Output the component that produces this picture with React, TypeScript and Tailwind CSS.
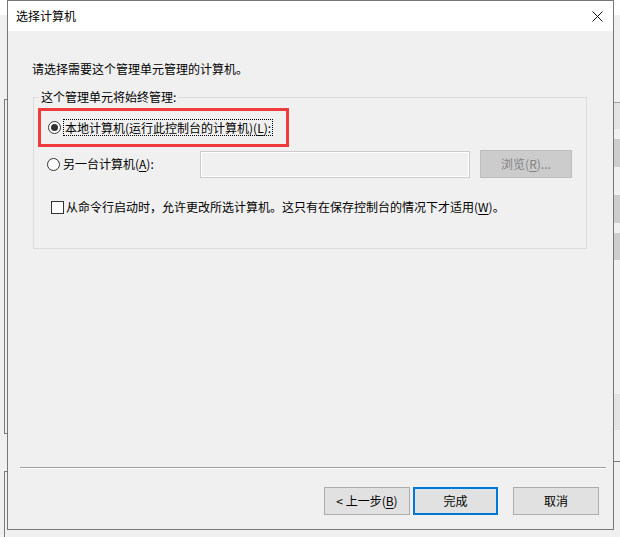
import React from "react";

const font = "font-['Noto_Sans_CJK_SC',sans-serif]";

const Key = ({ children }: { children: React.ReactNode }) => (
  <span className="underline underline-offset-2">{children}</span>
);

const Radio = ({ checked }: { checked?: boolean }) => (
  <span className="flex h-[13px] w-[13px] shrink-0 items-center justify-center rounded-full border border-[#333333] bg-white">
    {checked && <span className="h-[7px] w-[7px] rounded-full bg-[#333333]" />}
  </span>
);

const Button = ({ children, primary }: { children: React.ReactNode; primary?: boolean }) => (
  <button
    className={
      primary
        ? "flex h-[28px] w-[85px] items-center justify-center border-2 border-[#0078d7] bg-[#e1e1e1] text-[12px] leading-[16px] text-black"
        : "flex h-[28px] w-[86px] items-center justify-center border border-[#adadad] bg-[#e1e1e1] text-[12px] leading-[16px] text-black"
    }
  >
    {children}
  </button>
);

export default function App() {
  return (
    <div className={`flex h-[537px] w-[620px] overflow-hidden bg-[#f0f0f0] ${font}`}>
      {/* window behind, left edge */}
      <div className="flex w-[7px] shrink-0 flex-col">
        <div className="h-[15px] bg-white" />
        <div className="ml-[4px] mt-[84px] h-[335px] border-l border-t border-b border-[#7a7a7a]" />
        <div className="ml-[4px] mt-[37px] flex-1 border-l border-t border-[#7a7a7a]" />
      </div>

      {/* dialog */}
      <div className="flex h-[530px] w-[607px] shrink-0 flex-col border border-[#777777] bg-[#f0f0f0]">
        <div className="flex h-[30px] shrink-0 items-center justify-between bg-white pl-[8px] pr-[8px]">
          <span className="text-[12px] leading-[16px] text-black">选择计算机</span>
          <svg width="11" height="11" viewBox="0 0 11 11" className="mr-[2px]">
            <path d="M0.5 0.5 L10.5 10.5 M10.5 0.5 L0.5 10.5" stroke="#111" strokeWidth="1" fill="none" />
          </svg>
        </div>

        <div className="flex flex-1 flex-col text-[12px] leading-[16px] text-black">
          <p className="ml-[24px] mt-[30px]">请选择需要这个管理单元管理的计算机。</p>

          <fieldset className="ml-[25px] mt-[12px] w-[554px] border border-[#dcdcdc] pb-[33px] pl-[4px]">
            <legend className="ml-[1px] px-[2px]">这个管理单元将始终管理:</legend>

            <div className="mt-[3px] flex w-fit items-center border-[3px] border-[#ef3b3b] py-[8px] pl-[7px] pr-[13px]">
              <Radio checked />
              <span className="ml-[2px] border border-dotted border-black px-[1px] leading-[15px]">
                本地计算机(运行此控制台的计算机)(<Key>L</Key>):
              </span>
            </div>

            <div className="ml-[9px] mt-[3px] flex items-center">
              <Radio />
              <span className="ml-[3px] w-[137px]">
                另一台计算机(<Key>A</Key>):
              </span>
              <div className="h-[27px] w-[270px] border border-[#cccccc] bg-[#f0f0f0] shadow-[inset_0_0_0_1px_#ffffff]" />
              <div className="ml-[10px] flex h-[28px] w-[92px] items-center justify-center border border-[#bfbfbf] bg-[#cccccc] text-[#838383]">
                浏览(<Key>R</Key>)...
              </div>
            </div>

            <div className="ml-[13px] mt-[21px] flex items-center">
              <span className="h-[13px] w-[13px] shrink-0 border border-[#333333] bg-white" />
              <span className="ml-[2px]">
                从命令行启动时，允许更改所选计算机。这只有在保存控制台的情况下才适用(<Key>W</Key>)。
              </span>
            </div>
          </fieldset>

          <div className="flex-1" />

          <div className="ml-[12px] mr-[7px] h-[2px] border-t border-[#a0a0a0] bg-white" />

          <div className="mt-[18px] flex justify-end pb-[14px] pr-[14px]">
            <Button>
              &lt; 上一步(<Key>B</Key>)
            </Button>
            <div className="ml-[3px]">
              <Button primary>完成</Button>
            </div>
            <div className="ml-[15px]">
              <Button>取消</Button>
            </div>
          </div>
        </div>
      </div>

      {/* window behind, right edge */}
      <div className="flex flex-1 flex-col">
        <div className="h-[15px] bg-white" />
        <div className="mt-[87px] h-[27px] border-t border-[#a0a0a0] bg-[#e3e3e3]" />
        <div className="mt-[10px] h-[28px] bg-[#cdcdcd]" />
        <div className="mt-[28px] h-[28px] bg-[#cdcdcd]" />
        <div className="mt-[10px] h-[27px] bg-[#cdcdcd]" />
        <div className="mt-[134px] h-[36px] bg-[#e3e3e3]" />
        <div className="mt-[31px] border-t border-[#7a7a7a]" />
      </div>
    </div>
  );
}
